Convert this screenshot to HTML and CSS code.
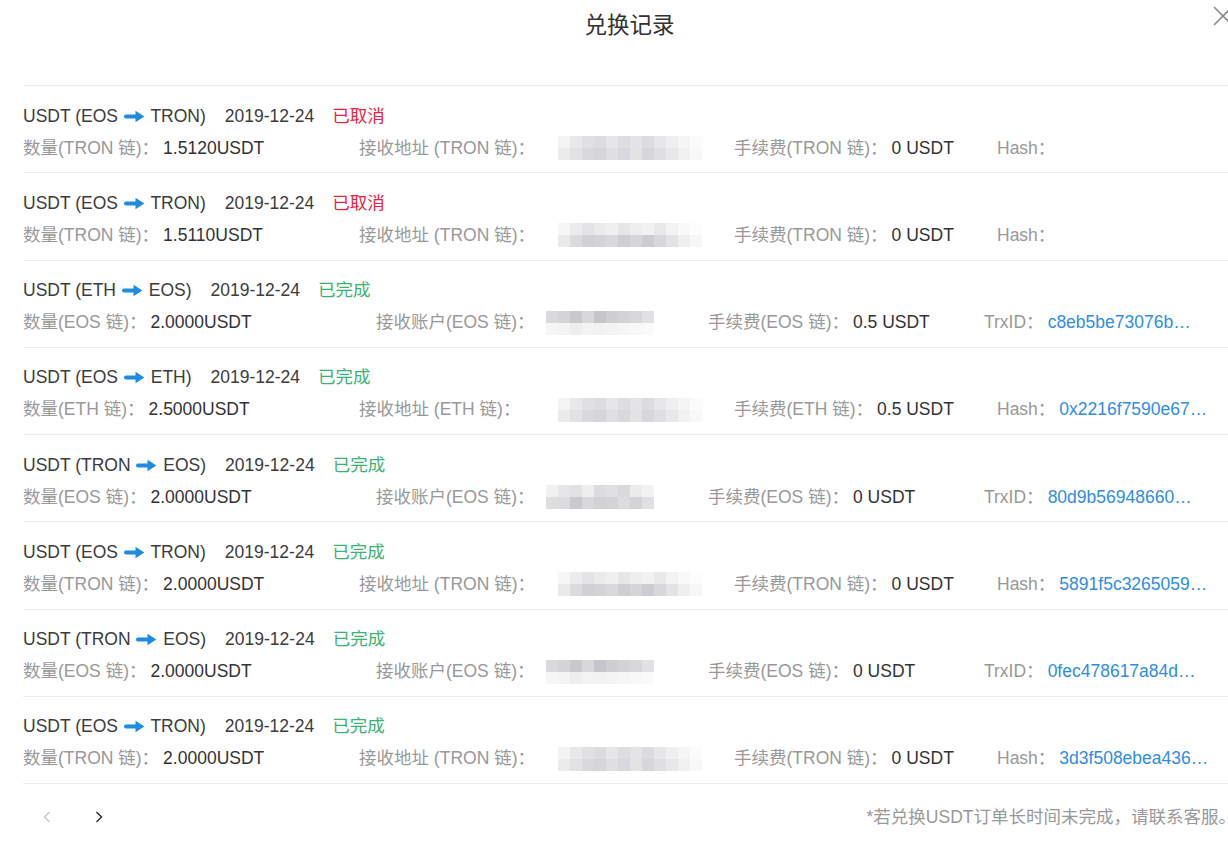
FILE: index.html
```html
<!DOCTYPE html>
<html lang="zh-CN">
<head>
  <meta charset="UTF-8">
  <meta name="viewport" content="width=device-width, initial-scale=1.0">
  <title>兑换记录</title>
  <link rel="stylesheet" href="styles.css">
</head>
<body>
  <div class="modal">
    <div class="modal-header">
      <h2 class="modal-title">兑换记录</h2>
      <span class="modal-close">
        <svg width="20" height="20" viewBox="0 0 20 20"><path d="M1 1L19 19M19 1L1 19" stroke="#8c8c8c" stroke-width="1.6" fill="none"/></svg>
      </span>
    </div>

    <ul class="record-list">
      <li class="record">
        <div class="record-head">
          <span class="record-pair">USDT (EOS <svg class="arrow" viewBox="0 0 21 13"><path d="M2 4.5h9.5V0.8l8.8 5.7-8.8 5.7V8.5H2a2 2 0 0 1 0-4z"/></svg> TRON)</span>
          <span class="record-date">2019-12-24</span>
          <span class="record-status status-cancel">已取消</span>
        </div>
        <div class="record-detail detail-addr">
          <div class="field"><span class="field-label">数量(TRON 链)：</span><span class="field-value">1.5120USDT</span></div>
          <div class="field"><span class="field-label field-to">接收地址 (TRON 链)：</span><span class="mosaic mosaic-addr mosaic-a"></span></div>
          <div class="field"><span class="field-label">手续费(TRON 链)：</span><span class="field-value">0 USDT</span></div>
          <div class="field"><span class="field-label">Hash：</span><span class="field-hash"></span></div>
        </div>
      </li>

      <li class="record">
        <div class="record-head">
          <span class="record-pair">USDT (EOS <svg class="arrow" viewBox="0 0 21 13"><path d="M2 4.5h9.5V0.8l8.8 5.7-8.8 5.7V8.5H2a2 2 0 0 1 0-4z"/></svg> TRON)</span>
          <span class="record-date">2019-12-24</span>
          <span class="record-status status-cancel">已取消</span>
        </div>
        <div class="record-detail detail-addr">
          <div class="field"><span class="field-label">数量(TRON 链)：</span><span class="field-value">1.5110USDT</span></div>
          <div class="field"><span class="field-label field-to">接收地址 (TRON 链)：</span><span class="mosaic mosaic-addr mosaic-b"></span></div>
          <div class="field"><span class="field-label">手续费(TRON 链)：</span><span class="field-value">0 USDT</span></div>
          <div class="field"><span class="field-label">Hash：</span><span class="field-hash"></span></div>
        </div>
      </li>

      <li class="record">
        <div class="record-head">
          <span class="record-pair">USDT (ETH <svg class="arrow" viewBox="0 0 21 13"><path d="M2 4.5h9.5V0.8l8.8 5.7-8.8 5.7V8.5H2a2 2 0 0 1 0-4z"/></svg> EOS)</span>
          <span class="record-date">2019-12-24</span>
          <span class="record-status status-done">已完成</span>
        </div>
        <div class="record-detail detail-account">
          <div class="field"><span class="field-label">数量(EOS 链)：</span><span class="field-value">2.0000USDT</span></div>
          <div class="field"><span class="field-label field-to">接收账户(EOS 链)：</span><span class="mosaic mosaic-account mosaic-c"></span></div>
          <div class="field"><span class="field-label">手续费(EOS 链)：</span><span class="field-value">0.5 USDT</span></div>
          <div class="field"><span class="field-label">TrxID：</span><a class="field-hash" href="#">c8eb5be73076b9e2a41c7d0f58b3e6a92d4c1f07</a></div>
        </div>
      </li>

      <li class="record">
        <div class="record-head">
          <span class="record-pair">USDT (EOS <svg class="arrow" viewBox="0 0 21 13"><path d="M2 4.5h9.5V0.8l8.8 5.7-8.8 5.7V8.5H2a2 2 0 0 1 0-4z"/></svg> ETH)</span>
          <span class="record-date">2019-12-24</span>
          <span class="record-status status-done">已完成</span>
        </div>
        <div class="record-detail detail-addr">
          <div class="field"><span class="field-label">数量(ETH 链)：</span><span class="field-value">2.5000USDT</span></div>
          <div class="field"><span class="field-label field-to">接收地址 (ETH 链)：</span><span class="mosaic mosaic-addr mosaic-a"></span></div>
          <div class="field"><span class="field-label">手续费(ETH 链)：</span><span class="field-value">0.5 USDT</span></div>
          <div class="field"><span class="field-label">Hash：</span><a class="field-hash" href="#">0x2216f7590e6758c1d4a9b3e027f6c81d5a94e3b2</a></div>
        </div>
      </li>

      <li class="record">
        <div class="record-head">
          <span class="record-pair">USDT (TRON <svg class="arrow" viewBox="0 0 21 13"><path d="M2 4.5h9.5V0.8l8.8 5.7-8.8 5.7V8.5H2a2 2 0 0 1 0-4z"/></svg> EOS)</span>
          <span class="record-date">2019-12-24</span>
          <span class="record-status status-done">已完成</span>
        </div>
        <div class="record-detail detail-account">
          <div class="field"><span class="field-label">数量(EOS 链)：</span><span class="field-value">2.0000USDT</span></div>
          <div class="field"><span class="field-label field-to">接收账户(EOS 链)：</span><span class="mosaic mosaic-account mosaic-d"></span></div>
          <div class="field"><span class="field-label">手续费(EOS 链)：</span><span class="field-value">0 USDT</span></div>
          <div class="field"><span class="field-label">TrxID：</span><a class="field-hash" href="#">80d9b5694866031e7c2a58d4f0b9e6a13c7d52e8</a></div>
        </div>
      </li>

      <li class="record">
        <div class="record-head">
          <span class="record-pair">USDT (EOS <svg class="arrow" viewBox="0 0 21 13"><path d="M2 4.5h9.5V0.8l8.8 5.7-8.8 5.7V8.5H2a2 2 0 0 1 0-4z"/></svg> TRON)</span>
          <span class="record-date">2019-12-24</span>
          <span class="record-status status-done">已完成</span>
        </div>
        <div class="record-detail detail-addr">
          <div class="field"><span class="field-label">数量(TRON 链)：</span><span class="field-value">2.0000USDT</span></div>
          <div class="field"><span class="field-label field-to">接收地址 (TRON 链)：</span><span class="mosaic mosaic-addr mosaic-b"></span></div>
          <div class="field"><span class="field-label">手续费(TRON 链)：</span><span class="field-value">0 USDT</span></div>
          <div class="field"><span class="field-label">Hash：</span><a class="field-hash" href="#">5891f5c32650592e8d1b7a4c6f03e95d27b8a1c4</a></div>
        </div>
      </li>

      <li class="record">
        <div class="record-head">
          <span class="record-pair">USDT (TRON <svg class="arrow" viewBox="0 0 21 13"><path d="M2 4.5h9.5V0.8l8.8 5.7-8.8 5.7V8.5H2a2 2 0 0 1 0-4z"/></svg> EOS)</span>
          <span class="record-date">2019-12-24</span>
          <span class="record-status status-done">已完成</span>
        </div>
        <div class="record-detail detail-account">
          <div class="field"><span class="field-label">数量(EOS 链)：</span><span class="field-value">2.0000USDT</span></div>
          <div class="field"><span class="field-label field-to">接收账户(EOS 链)：</span><span class="mosaic mosaic-account mosaic-c"></span></div>
          <div class="field"><span class="field-label">手续费(EOS 链)：</span><span class="field-value">0 USDT</span></div>
          <div class="field"><span class="field-label">TrxID：</span><a class="field-hash" href="#">0fec478617a84d3b9e52c1a06d8f7e4b2c9a5d13</a></div>
        </div>
      </li>

      <li class="record">
        <div class="record-head">
          <span class="record-pair">USDT (EOS <svg class="arrow" viewBox="0 0 21 13"><path d="M2 4.5h9.5V0.8l8.8 5.7-8.8 5.7V8.5H2a2 2 0 0 1 0-4z"/></svg> TRON)</span>
          <span class="record-date">2019-12-24</span>
          <span class="record-status status-done">已完成</span>
        </div>
        <div class="record-detail detail-addr">
          <div class="field"><span class="field-label">数量(TRON 链)：</span><span class="field-value">2.0000USDT</span></div>
          <div class="field"><span class="field-label field-to">接收地址 (TRON 链)：</span><span class="mosaic mosaic-addr mosaic-a"></span></div>
          <div class="field"><span class="field-label">手续费(TRON 链)：</span><span class="field-value">0 USDT</span></div>
          <div class="field"><span class="field-label">Hash：</span><a class="field-hash" href="#">3d3f508ebea4361c7e2d9b5a08f4c63e1b7d2a95</a></div>
        </div>
      </li>
    </ul>

    <div class="modal-footer">
      <div class="pager">
        <span class="pager-btn pager-prev">
          <svg width="8" height="12" viewBox="0 0 8 12"><path d="M6.5 1L1.5 6l5 5" stroke="#c5c8ce" stroke-width="1.5" fill="none"/></svg>
        </span>
        <span class="pager-btn pager-next">
          <svg width="8" height="12" viewBox="0 0 8 12"><path d="M1.5 1l5 5-5 5" stroke="#303133" stroke-width="1.5" fill="none"/></svg>
        </span>
      </div>
      <p class="footer-note">*若兑换USDT订单长时间未完成，请联系客服。</p>
    </div>
  </div>
</body>
</html>
```

FILE: styles.css
```css
*{
  margin: 0;
  padding: 0;
  box-sizing: border-box;
}

html,
body{
  overflow: hidden;
  background: #fff;
}

body{
  font-family: "Liberation Sans", Arial, "Noto Sans CJK SC", sans-serif;
  font-size: 17.5px;
  line-height: 25px;
  color: #333;
}

.modal{
  width: 1259px;
  padding: 0 23px;
  position: relative;
}

/* 头部 */
.modal-header{
  height: 86px;
  border-bottom: 1px solid #ebebf0;
}
.modal-title{
  font-size: 22.5px;
  font-weight: normal;
  line-height: 51px;
  text-align: center;
  color: #333;
}
.modal-close{
  position: absolute;
  top: 6px;
  right: 26px;
  width: 20px;
  height: 20px;
  cursor: pointer;
}
.modal-close svg{
  display: block;
}

/* 记录列表 */
.record-list{
  list-style: none;
}
.record{
  padding: 17.5px 0 11.75px;
  border-bottom: 1px solid #ebebf0;
}
.record-head{
  display: flex;
  white-space: nowrap;
  color: #3c3c3c;
}
.record-pair{
  margin-right: 19px;
}
.record-date{
  margin-right: 18px;
}
.arrow{
  width: 21px;
  height: 13px;
  margin: 0 1px;
  fill: #1e8ce0;
  vertical-align: -1px;
}
.status-cancel{
  color: #f2203c;
}
.status-done{
  color: #3cb372;
}

.record-detail{
  display: grid;
  margin-top: 7px;
  white-space: nowrap;
}
.detail-addr{
  grid-template-columns: 336px 375px 263px 1fr;
}
.detail-account{
  grid-template-columns: 353px 332px 276px 1fr;
}
.field{
  display: flex;
  align-items: center;
}
.field-label{
  color: #999;
}
.detail-addr .field-to{
  min-width: 199px;
}
.detail-account .field-to{
  min-width: 170px;
}
.field-value{
  margin-left: 4px;
  color: #333;
}
.field-hash{
  display: inline-block;
  width: 150px;
  margin-left: 4px;
  overflow: hidden;
  text-overflow: ellipsis;
  color: #2f8de4;
  text-decoration: none;
}

/* 打码的地址 */
.mosaic{
  display: inline-block;
  height: 24px;
}
.mosaic-addr{
  width: 144px;
}
.mosaic-account{
  width: 108px;
}
.mosaic-a{
  background:
    linear-gradient(90deg, #f3f3f4 0 12px, #e8e8ea 12px 24px, #e1e1e3 24px 36px, #dcdcdf 36px 48px, #e6e6e8 48px 60px, #dedee1 60px 72px, #e4e4e6 72px 84px, #dcdce0 84px 96px, #e7e7e9 96px 108px, #efeff1 108px 120px, #f5f5f6 120px 132px, #fbfbfb 132px 144px) 0 0 / 144px 12px no-repeat,
    linear-gradient(90deg, #ebebec 0 12px, #e2e2e4 12px 24px, #d9d9dc 24px 36px, #d6d6d9 36px 48px, #dfdfe1 48px 60px, #d9d9dd 60px 72px, #e3e3e4 72px 84px, #d7d7db 84px 96px, #dfdfe2 96px 108px, #e8e8ea 108px 120px, #f1f1f2 120px 132px, #f8f8f8 132px 144px) 0 12px / 144px 12px no-repeat;
}
.mosaic-b{
  background:
    linear-gradient(90deg, #f6f6f6 0 12px, #ececee 12px 24px, #e4e4e6 24px 36px, #ebebec 36px 48px, #f0f0f1 48px 60px, #e6e6e8 60px 72px, #eeeeef 72px 84px, #f2f2f3 84px 96px, #e9e9eb 96px 108px, #f3f3f4 108px 120px, #f9f9f9 120px 132px, #fdfdfd 132px 144px) 0 0 / 144px 12px no-repeat,
    linear-gradient(90deg, #eaeaea 0 12px, #dbdbde 12px 24px, #d1d1d5 24px 36px, #d4d4d7 36px 48px, #d9d9dc 48px 60px, #cfcfd3 60px 72px, #d6d6d9 72px 84px, #cdcdd1 84px 96px, #d8d8db 96px 108px, #e3e3e5 108px 120px, #efeff0 120px 132px, #f7f7f7 132px 144px) 0 12px / 144px 12px no-repeat;
}
.mosaic-c{
  background:
    linear-gradient(90deg, #d9d9db 0 12px, #d4d4d6 12px 24px, #c9c9cc 24px 36px, #d8d8da 36px 48px, #c6c6ca 48px 60px, #cfcfd2 60px 72px, #d3d3d6 72px 84px, #d8d8da 84px 96px, #e2e2e4 96px 108px) 0 0 / 108px 12px no-repeat,
    linear-gradient(90deg, #f6f6f6 0 12px, #f4f4f4 12px 24px, #eeeeef 24px 36px, #f3f3f4 36px 48px, #f2f2f3 48px 60px, #f4f4f5 60px 72px, #f6f6f6 72px 84px, #f8f8f8 84px 96px, #fafafa 96px 108px) 0 12px / 108px 12px no-repeat;
}
.mosaic-d{
  background:
    linear-gradient(90deg, #f1f1f2 0 12px, #e6e6e8 12px 24px, #e2e2e4 24px 36px, #eeeeef 36px 48px, #dcdcdf 48px 60px, #e0e0e2 60px 72px, #dadadd 72px 84px, #ececed 84px 96px, #f2f2f3 96px 108px) 0 0 / 108px 12px no-repeat,
    linear-gradient(90deg, #dededf 0 12px, #dcdcde 12px 24px, #cacace 24px 36px, #d8d8da 36px 48px, #d2d2d5 48px 60px, #d4d4d7 60px 72px, #dcdcde 72px 84px, #d4d4d7 84px 96px, #e0e0e2 96px 108px) 0 12px / 108px 12px no-repeat;
}

/* 底部 */
.modal-footer{
  display: flex;
  justify-content: space-between;
  padding: 20.5px 0;
}
.pager{
  display: flex;
  gap: 24px;
  padding-left: 10px;
}
.pager-btn{
  display: flex;
  align-items: center;
  justify-content: center;
  width: 28px;
  height: 25px;
  cursor: pointer;
}
.footer-note{
  color: #999;
}
```
